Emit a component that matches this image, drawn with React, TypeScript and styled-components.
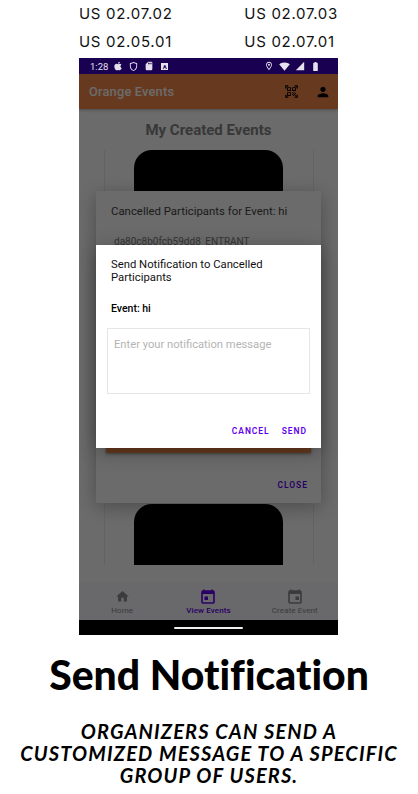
import styled, {createGlobalStyle} from "styled-components";
import {FaApple} from "react-icons/fa";
import {
    MdBatteryFull,
    MdHome,
    MdOutlineLocationOn,
    MdOutlineShield,
    MdPerson,
    MdQrCodeScanner,
    MdSdCard,
    MdSignalCellular4Bar,
    MdSignalWifi4Bar
} from "react-icons/md";

const GlobalStyle = createGlobalStyle`
  html, body {
    margin: 0;
    padding: 0;
    background: #fff;
  }
  * {
    box-sizing: border-box;
  }
`

const CalendarIcon = ({dot}: { dot: "left" | "right" }) => (
    <svg width="14" height="15" viewBox="0 0 14 15" fill="none">
        <path d="M3 0.5v2M11 0.5v2" stroke="currentColor" strokeWidth="1.5"/>
        <rect x="1" y="2" width="12" height="12" rx="1" stroke="currentColor" strokeWidth="1.6"/>
        <rect x="1" y="2" width="12" height="3" fill="currentColor"/>
        <rect x={dot === "left" ? 3.5 : 7.5} y="7.5" width="3.5" height="3.5" fill="currentColor"/>
    </svg>
)

export default function App() {
    return (
        <Page>
            <GlobalStyle/>
            <Stories>
                <Story>US 02.07.02</Story>
                <Story>US 02.07.03</Story>
                <Story>US 02.05.01</Story>
                <Story>US 02.07.01</Story>
            </Stories>
            <Phone>
                <StatusBar>
                    <StatusGroup>
                        <span>1:28</span>
                        <FaApple size={10}/>
                        <MdOutlineShield size={11}/>
                        <MdSdCard size={10}/>
                        <ABox>A</ABox>
                    </StatusGroup>
                    <StatusGroup>
                        <MdOutlineLocationOn size={10}/>
                        <MdSignalWifi4Bar size={11}/>
                        <MdSignalCellular4Bar size={10}/>
                        <MdBatteryFull size={11}/>
                    </StatusGroup>
                </StatusBar>
                <Screen>
                    <AppBar>
                        <AppTitle>Orange Events</AppTitle>
                        <AppActions>
                            <MdQrCodeScanner size={15}/>
                            <MdPerson size={16}/>
                        </AppActions>
                    </AppBar>
                    <Content>
                        <PageTitle>My Created Events</PageTitle>
                        <CardList>
                            <EventCard $height={341}>
                                <Poster $height={341}/>
                            </EventCard>
                            <EventCard $height={61}>
                                <Poster $height={61}/>
                            </EventCard>
                        </CardList>
                    </Content>
                    <BottomNav>
                        <NavItem>
                            <MdHome size={15}/>
                            <NavLabel>Home</NavLabel>
                        </NavItem>
                        <NavItem $active>
                            <CalendarIcon dot="left"/>
                            <NavLabel>View Events</NavLabel>
                        </NavItem>
                        <NavItem>
                            <CalendarIcon dot="right"/>
                            <NavLabel>Create Event</NavLabel>
                        </NavItem>
                    </BottomNav>
                    <ParticipantsDialog>
                        <ParticipantsTitle>Cancelled Participants for Event: hi</ParticipantsTitle>
                        <ParticipantRow>da80c8b0fcb59dd8_ENTRANT</ParticipantRow>
                        <NotifyButton/>
                        <CloseRow>
                            <TextButton>CLOSE</TextButton>
                        </CloseRow>
                    </ParticipantsDialog>
                    <Scrim/>
                    <NotifyDialog>
                        <NotifyTitle>Send Notification to Cancelled Participants</NotifyTitle>
                        <EventName>Event: hi</EventName>
                        <MessageBox placeholder="Enter your notification message"/>
                        <DialogActions>
                            <TextButton>CANCEL</TextButton>
                            <TextButton>SEND</TextButton>
                        </DialogActions>
                    </NotifyDialog>
                </Screen>
                <GestureBar>
                    <GestureHandle/>
                </GestureBar>
            </Phone>
            <Headline>Send Notification</Headline>
            <Caption>Organizers can send a<br/>customized message to a specific<br/>group of users.</Caption>
        </Page>
    )
}

const Page = styled.div`
  width: 418px;
  height: 794px;
  overflow: hidden;
  background: #fff;
  display: flex;
  flex-direction: column;
  align-items: center;
`

const Stories = styled.div`
  width: 259px;
  height: 58px;
  margin-right: 1px;
  display: grid;
  grid-template-columns: auto auto;
  grid-auto-rows: 27.5px;
  justify-content: space-between;
  align-items: center;
`

const Story = styled.div`
  font-family: "Inter", sans-serif;
  font-size: 15px;
  letter-spacing: 0.7px;
  color: #111;
  white-space: nowrap;
`

const Phone = styled.div`
  width: 259px;
  height: 577px;
  margin-right: 1px;
  display: flex;
  flex-direction: column;
  font-family: "Roboto", sans-serif;
`

const StatusBar = styled.div`
  height: 16px;
  flex: none;
  padding: 0 17px 0 11px;
  background: #1a0050;
  color: #e4e0ee;
  font-size: 9.5px;
  display: flex;
  align-items: center;
  justify-content: space-between;
`

const StatusGroup = styled.div`
  display: flex;
  align-items: center;
  gap: 5px;
`

const ABox = styled.span`
  width: 7px;
  height: 7px;
  margin-left: 2px;
  background: #e4e0ee;
  color: #1a0050;
  font-size: 6px;
  font-weight: 700;
  line-height: 7px;
  text-align: center;
`

const Screen = styled.div`
  position: relative;
  flex: 1;
  display: flex;
  flex-direction: column;
  overflow: hidden;
  background: #fff;
`

const AppBar = styled.div`
  height: 35px;
  flex: none;
  padding: 0 7px 0 10px;
  background: #f58a4b;
  box-shadow: 0 1px 3px rgba(0, 0, 0, 0.3);
  display: flex;
  align-items: center;
  justify-content: space-between;
  position: relative;
  z-index: 1;
`

const AppTitle = styled.div`
  font-size: 12.8px;
  font-weight: 500;
  color: #fff;
  letter-spacing: 0.2px;
`

const AppActions = styled.div`
  display: flex;
  align-items: center;
  gap: 16px;
  color: #000;
`

const Content = styled.div`
  flex: 1;
  min-height: 0;
  display: flex;
  flex-direction: column;
  align-items: center;
`

const PageTitle = styled.div`
  margin-top: 12px;
  height: 19px;
  line-height: 19px;
  font-size: 15px;
  font-weight: 700;
  color: #858585;
`

const CardList = styled.div`
  margin-top: 10px;
  display: flex;
  flex-direction: column;
  width: 210px;
`

const EventCard = styled.div<{ $height: number }>`
  height: ${p => p.$height}px;
  margin-bottom: 13px;
  border: solid #ececec;
  border-width: 0 1px;
  display: flex;
  justify-content: center;
`

const Poster = styled.div<{ $height: number }>`
  width: 149px;
  height: ${p => p.$height}px;
  background: #000;
  border-radius: 18px 18px 0 0;
`

const BottomNav = styled.div`
  height: 37px;
  flex: none;
  padding-top: 6px;
  background: #fbf8ff;
  display: grid;
  grid-template-columns: repeat(3, 1fr);
`

const NavItem = styled.div<{ $active?: boolean }>`
  display: flex;
  flex-direction: column;
  align-items: center;
  gap: 1px;
  color: ${p => (p.$active ? "#6200ee" : "#8c8c8c")};
  font-weight: ${p => (p.$active ? 500 : 400)};
`

const NavLabel = styled.div`
  font-size: 8px;
  line-height: 11px;
  letter-spacing: 0.1px;
`

const Dialog = styled.div`
  position: absolute;
  left: 17px;
  width: 225px;
  background: #fff;
  box-shadow: 0 4px 18px rgba(0, 0, 0, 0.3);
  display: flex;
  flex-direction: column;
`

const ParticipantsDialog = styled(Dialog)`
  top: 117px;
  height: 312px;
  padding: 13px 10px 0;
`

const ParticipantsTitle = styled.div`
  padding-left: 5px;
  font-size: 11.4px;
  line-height: 14px;
  color: #444;
`

const ParticipantRow = styled.div`
  margin-top: 17px;
  padding-left: 8px;
  font-size: 10px;
  line-height: 14px;
  color: #808080;
`

const NotifyButton = styled.div`
  margin-top: 182px;
  height: 22px;
  background: #f58a4b;
  box-shadow: 0 1px 3px rgba(0, 0, 0, 0.4);
`

const CloseRow = styled.div`
  margin-top: 26px;
  display: flex;
  justify-content: flex-end;
  padding-right: 3px;
`

const TextButton = styled.span`
  font-size: 8.5px;
  font-weight: 600;
  line-height: 12px;
  letter-spacing: 0.95px;
  color: #6200ee;
`

const Scrim = styled.div`
  position: absolute;
  inset: 0;
  z-index: 2;
  background: rgba(0, 0, 0, 0.58);
`

const NotifyDialog = styled(Dialog)`
  z-index: 3;
  top: 171px;
  height: 203px;
  padding: 13px 11px 0;
`

const NotifyTitle = styled.div`
  padding: 0 4px;
  font-size: 11.3px;
  line-height: 13px;
  color: #111;
`

const EventName = styled.div`
  margin-top: 18px;
  padding: 0 4px;
  font-size: 10.5px;
  line-height: 13px;
  font-weight: 500;
  color: #000;
`

const MessageBox = styled.textarea`
  margin-top: 13px;
  width: 203px;
  height: 66px;
  padding: 9px 6px;
  border: 1px solid #e6e6e6;
  outline: none;
  resize: none;
  font-family: "Roboto", sans-serif;
  font-size: 11.2px;
  line-height: 13px;
  background: #fff;
  &::placeholder {
    color: #b4b4b4;
    opacity: 1;
  }
`

const DialogActions = styled.div`
  margin-top: 31px;
  padding-right: 3px;
  display: flex;
  justify-content: flex-end;
  gap: 12px;
`

const GestureBar = styled.div`
  height: 15px;
  flex: none;
  background: #000;
  display: flex;
  align-items: center;
  justify-content: center;
`

const GestureHandle = styled.div`
  width: 69px;
  height: 2px;
  border-radius: 1px;
  background: #eee;
`

const Headline = styled.h1`
  margin: 16px 0 0;
  font-family: "Lato", sans-serif;
  font-size: 40.9px;
  line-height: 48px;
  font-weight: 900;
  font-variant-ligatures: none;
  color: #000;
  white-space: nowrap;
`

const Caption = styled.p`
  margin: 21px 0 0;
  width: 410px;
  font-family: "Lato", sans-serif;
  font-size: 20px;
  line-height: 22px;
  letter-spacing: 1.15px;
  font-weight: 700;
  font-style: italic;
  text-transform: uppercase;
  text-align: center;
  color: #000;
`
